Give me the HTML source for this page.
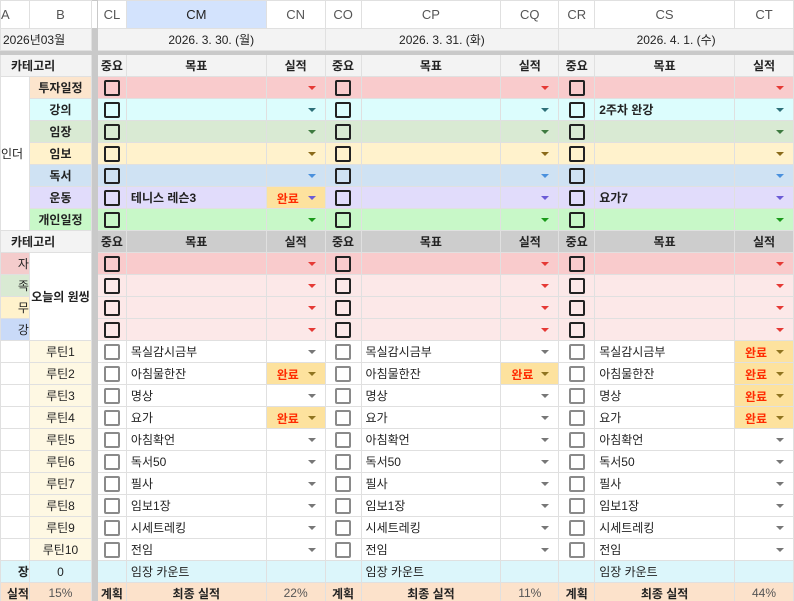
<!DOCTYPE html>
<html><head><meta charset="utf-8"><style>
html,body{margin:0;padding:0;background:#fff;width:794px;height:601px;overflow:hidden}
table{border-collapse:collapse;table-layout:fixed;font-family:"Liberation Sans","Noto Sans CJK KR",sans-serif;font-size:12px;color:#222}
td{border:1px solid #e0e0e0;padding:0;white-space:nowrap;overflow:hidden;position:relative;text-align:center}
tr{height:22px}
.h td{color:#555;font-size:13px;background:#fff}
.dv{background:#c9c9c9;border-color:#c9c9c9}
.g{background:#f3f3f3}
.gg{background:#cdcdcd}
b{font-weight:bold}
.l{text-align:left;padding-left:4px}
.cb{display:inline-block;width:12px;height:12px;border:2px solid #222;border-radius:2px;vertical-align:middle}
.cg{display:inline-block;width:12px;height:12px;border:2px solid #8a8a8a;border-radius:2px;vertical-align:middle}
.ar{position:absolute;right:9px;top:9px;width:0;height:0;border-left:4px solid transparent;border-right:4px solid transparent;border-top:4px solid #777}
.ok{background:#fde29e}
.ok i{font-style:normal;font-weight:bold;color:#ff2a00;position:absolute;left:10px;top:3px}
.ok .ar{border-top-color:#8f7420}
.r1{background:#f9cbcc}.r2{background:#dcfdfd}.r3{background:#d9ead3}.r4{background:#fff2cc}.r5{background:#cfe2f3}.r6{background:#e1dcfb}.r7{background:#c8f8c8}.rp{background:#fce8e8}
.a1 .ar{border-top-color:#e53935}.a2 .ar{border-top-color:#2d6f78}.a3 .ar{border-top-color:#3e7a40}.a4 .ar{border-top-color:#8a6a1a}.a5 .ar{border-top-color:#4a90dd}.a6 .ar{border-top-color:#6b5bd6}.a7 .ar{border-top-color:#1a9a1a}
.cr{background:#fef8e3}
.cy{background:#dcf6fb}
.pe{background:#fce2cb}
</style></head><body>
<table>
<colgroup><col style="width:29px"><col style="width:62px"><col style="width:6px"><col style="width:29px"><col style="width:140px"><col style="width:59px"><col style="width:36px"><col style="width:140px"><col style="width:58px"><col style="width:36px"><col style="width:140px"><col style="width:59px"></colgroup>
<tr class="h" style="height:28px"><td style="text-align:left">A</td><td>B</td><td class="dv"></td><td>CL</td><td style="background:#d3e3fd;color:#222">CM</td><td>CN</td><td>CO</td><td>CP</td><td>CQ</td><td>CR</td><td>CS</td><td>CT</td></tr>
<tr class="g"><td colspan="2" class="l" style="padding-left:2px">2026년03월</td><td class="dv"></td><td colspan="3">2026. 3. 30. (월)</td><td colspan="3">2026. 3. 31. (화)</td><td colspan="3">2026. 4. 1. (수)</td></tr>
<tr style="height:4px"><td colspan="12" class="dv"></td></tr>
<tr class="g"><td colspan="2" class="l" style="padding-left:10px"><b>카테고리</b></td><td class="dv"></td><td><b>중요</b></td><td><b>목표</b></td><td><b>실적</b></td><td><b>중요</b></td><td><b>목표</b></td><td><b>실적</b></td><td><b>중요</b></td><td><b>목표</b></td><td><b>실적</b></td></tr>
<tr class="r1 a1"><td rowspan="7" style="background:#fff;text-align:left">인더</td><td style="background:#fce5cd"><b>투자일정</b></td><td class="dv"></td><td><span class="cb"></span></td><td></td><td><span class="ar"></span></td><td><span class="cb"></span></td><td></td><td><span class="ar"></span></td><td><span class="cb"></span></td><td></td><td><span class="ar"></span></td></tr>
<tr class="r2 a2"><td><b>강의</b></td><td class="dv"></td><td><span class="cb"></span></td><td></td><td><span class="ar"></span></td><td><span class="cb"></span></td><td></td><td><span class="ar"></span></td><td><span class="cb"></span></td><td class="l"><b>2주차 완강</b></td><td><span class="ar"></span></td></tr>
<tr class="r3 a3"><td><b>임장</b></td><td class="dv"></td><td><span class="cb"></span></td><td></td><td><span class="ar"></span></td><td><span class="cb"></span></td><td></td><td><span class="ar"></span></td><td><span class="cb"></span></td><td></td><td><span class="ar"></span></td></tr>
<tr class="r4 a4"><td><b>임보</b></td><td class="dv"></td><td><span class="cb"></span></td><td></td><td><span class="ar"></span></td><td><span class="cb"></span></td><td></td><td><span class="ar"></span></td><td><span class="cb"></span></td><td></td><td><span class="ar"></span></td></tr>
<tr class="r5 a5"><td><b>독서</b></td><td class="dv"></td><td><span class="cb"></span></td><td></td><td><span class="ar"></span></td><td><span class="cb"></span></td><td></td><td><span class="ar"></span></td><td><span class="cb"></span></td><td></td><td><span class="ar"></span></td></tr>
<tr class="r6 a6"><td><b>운동</b></td><td class="dv"></td><td><span class="cb"></span></td><td class="l"><b>테니스 레슨3</b></td><td class="ok"><i>완료</i><span class="ar"></span></td><td><span class="cb"></span></td><td></td><td><span class="ar"></span></td><td><span class="cb"></span></td><td class="l"><b>요가7</b></td><td><span class="ar"></span></td></tr>
<tr class="r7 a7"><td><b>개인일정</b></td><td class="dv"></td><td><span class="cb"></span></td><td></td><td><span class="ar"></span></td><td><span class="cb"></span></td><td></td><td><span class="ar"></span></td><td><span class="cb"></span></td><td></td><td><span class="ar"></span></td></tr>
<tr class="gg"><td colspan="2" class="l g" style="padding-left:10px"><b>카테고리</b></td><td class="dv"></td><td><b>중요</b></td><td><b>목표</b></td><td><b>실적</b></td><td><b>중요</b></td><td><b>목표</b></td><td><b>실적</b></td><td><b>중요</b></td><td><b>목표</b></td><td><b>실적</b></td></tr>
<tr class="r1 a1"><td style="background:#f4cccc;text-align:right">자</td><td rowspan="4" style="background:#fff"><b>오늘의 원씽</b></td><td class="dv"></td><td><span class="cb"></span></td><td></td><td><span class="ar"></span></td><td><span class="cb"></span></td><td></td><td><span class="ar"></span></td><td><span class="cb"></span></td><td></td><td><span class="ar"></span></td></tr>
<tr class="rp a1"><td style="background:#d9ead3;text-align:right">족</td><td class="dv"></td><td><span class="cb"></span></td><td></td><td><span class="ar"></span></td><td><span class="cb"></span></td><td></td><td><span class="ar"></span></td><td><span class="cb"></span></td><td></td><td><span class="ar"></span></td></tr>
<tr class="rp a1"><td style="background:#fff2cc;text-align:right">무</td><td class="dv"></td><td><span class="cb"></span></td><td></td><td><span class="ar"></span></td><td><span class="cb"></span></td><td></td><td><span class="ar"></span></td><td><span class="cb"></span></td><td></td><td><span class="ar"></span></td></tr>
<tr class="rp a1"><td style="background:#c9daf8;text-align:right">강</td><td class="dv"></td><td><span class="cb"></span></td><td></td><td><span class="ar"></span></td><td><span class="cb"></span></td><td></td><td><span class="ar"></span></td><td><span class="cb"></span></td><td></td><td><span class="ar"></span></td></tr>
<tr><td></td><td class="cr">루틴1</td><td class="dv"></td><td><span class="cg"></span></td><td class="l">목실감시금부</td><td><span class="ar"></span></td><td><span class="cg"></span></td><td class="l">목실감시금부</td><td><span class="ar"></span></td><td><span class="cg"></span></td><td class="l">목실감시금부</td><td class="ok"><i>완료</i><span class="ar"></span></td></tr>
<tr><td></td><td class="cr">루틴2</td><td class="dv"></td><td><span class="cg"></span></td><td class="l">아침물한잔</td><td class="ok"><i>완료</i><span class="ar"></span></td><td><span class="cg"></span></td><td class="l">아침물한잔</td><td class="ok"><i>완료</i><span class="ar"></span></td><td><span class="cg"></span></td><td class="l">아침물한잔</td><td class="ok"><i>완료</i><span class="ar"></span></td></tr>
<tr><td></td><td class="cr">루틴3</td><td class="dv"></td><td><span class="cg"></span></td><td class="l">명상</td><td><span class="ar"></span></td><td><span class="cg"></span></td><td class="l">명상</td><td><span class="ar"></span></td><td><span class="cg"></span></td><td class="l">명상</td><td class="ok"><i>완료</i><span class="ar"></span></td></tr>
<tr><td></td><td class="cr">루틴4</td><td class="dv"></td><td><span class="cg"></span></td><td class="l">요가</td><td class="ok"><i>완료</i><span class="ar"></span></td><td><span class="cg"></span></td><td class="l">요가</td><td><span class="ar"></span></td><td><span class="cg"></span></td><td class="l">요가</td><td class="ok"><i>완료</i><span class="ar"></span></td></tr>
<tr><td></td><td class="cr">루틴5</td><td class="dv"></td><td><span class="cg"></span></td><td class="l">아침확언</td><td><span class="ar"></span></td><td><span class="cg"></span></td><td class="l">아침확언</td><td><span class="ar"></span></td><td><span class="cg"></span></td><td class="l">아침확언</td><td><span class="ar"></span></td></tr>
<tr><td></td><td class="cr">루틴6</td><td class="dv"></td><td><span class="cg"></span></td><td class="l">독서50</td><td><span class="ar"></span></td><td><span class="cg"></span></td><td class="l">독서50</td><td><span class="ar"></span></td><td><span class="cg"></span></td><td class="l">독서50</td><td><span class="ar"></span></td></tr>
<tr><td></td><td class="cr">루틴7</td><td class="dv"></td><td><span class="cg"></span></td><td class="l">필사</td><td><span class="ar"></span></td><td><span class="cg"></span></td><td class="l">필사</td><td><span class="ar"></span></td><td><span class="cg"></span></td><td class="l">필사</td><td><span class="ar"></span></td></tr>
<tr><td></td><td class="cr">루틴8</td><td class="dv"></td><td><span class="cg"></span></td><td class="l">임보1장</td><td><span class="ar"></span></td><td><span class="cg"></span></td><td class="l">임보1장</td><td><span class="ar"></span></td><td><span class="cg"></span></td><td class="l">임보1장</td><td><span class="ar"></span></td></tr>
<tr><td></td><td class="cr">루틴9</td><td class="dv"></td><td><span class="cg"></span></td><td class="l">시세트레킹</td><td><span class="ar"></span></td><td><span class="cg"></span></td><td class="l">시세트레킹</td><td><span class="ar"></span></td><td><span class="cg"></span></td><td class="l">시세트레킹</td><td><span class="ar"></span></td></tr>
<tr><td></td><td class="cr">루틴10</td><td class="dv"></td><td><span class="cg"></span></td><td class="l">전임</td><td><span class="ar"></span></td><td><span class="cg"></span></td><td class="l">전임</td><td><span class="ar"></span></td><td><span class="cg"></span></td><td class="l">전임</td><td><span class="ar"></span></td></tr>
<tr class="cy"><td style="text-align:right"><b>장</b></td><td>0</td><td class="dv"></td><td></td><td class="l">임장 카운트</td><td></td><td></td><td class="l">임장 카운트</td><td></td><td></td><td class="l">임장 카운트</td><td></td></tr>
<tr class="pe" style="height:21px"><td style="text-align:right"><b>실적</b></td><td style="color:#555">15%</td><td class="dv"></td><td><b>계획</b></td><td><b>최종 실적</b></td><td style="color:#555">22%</td><td><b>계획</b></td><td><b>최종 실적</b></td><td style="color:#555">11%</td><td><b>계획</b></td><td><b>최종 실적</b></td><td style="color:#555">44%</td></tr>
</table>
</body></html>
